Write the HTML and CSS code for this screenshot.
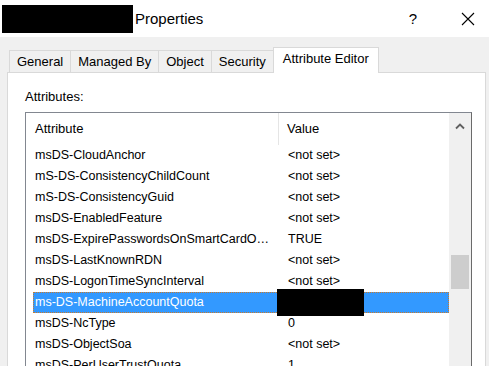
FILE: index.html
```html
<!DOCTYPE html>
<html lang="en">
<head>
    <meta charset="UTF-8">
    <link rel="stylesheet" href="styles.css">
</head>
<body>
    <div class="title-bar">
        <div class="redacted-name"></div>
        <span class="title-text">Properties</span>
        <span class="title-button help">?</span>
        <span class="title-button close">
            <svg width="14" height="14" viewBox="0 0 14 14"><path d="M1 1 L13 13 M13 1 L1 13" stroke="#000" stroke-width="1.1" fill="none"/></svg>
        </span>
    </div>

    <div class="dialog-body">
        <div class="tab-row">
            <div class="tab">General</div>
            <div class="tab">Managed By</div>
            <div class="tab">Object</div>
            <div class="tab">Security</div>
            <div class="tab active">Attribute Editor</div>
        </div>

        <div class="tab-panel">
            <p class="field-label">Attributes:</p>
            <div class="list-box">
                <div class="list-content">
                    <div class="list-header">
                        <div class="header-cell name-col">Attribute</div>
                        <div class="header-cell value-col">Value</div>
                    </div>
                    <div class="list-row"><span class="name-col">msDS-CloudAnchor</span><span class="value-col">&lt;not set&gt;</span></div>
                    <div class="list-row"><span class="name-col">mS-DS-ConsistencyChildCount</span><span class="value-col">&lt;not set&gt;</span></div>
                    <div class="list-row"><span class="name-col">mS-DS-ConsistencyGuid</span><span class="value-col">&lt;not set&gt;</span></div>
                    <div class="list-row"><span class="name-col">msDS-EnabledFeature</span><span class="value-col">&lt;not set&gt;</span></div>
                    <div class="list-row"><span class="name-col">msDS-ExpirePasswordsOnSmartCardOnlyAccounts</span><span class="value-col">TRUE</span></div>
                    <div class="list-row"><span class="name-col">msDS-LastKnownRDN</span><span class="value-col">&lt;not set&gt;</span></div>
                    <div class="list-row"><span class="name-col">msDS-LogonTimeSyncInterval</span><span class="value-col">&lt;not set&gt;</span></div>
                    <div class="list-row selected"><span class="name-col">ms-DS-MachineAccountQuota</span><span class="value-col"><span class="redacted-value"></span></span></div>
                    <div class="list-row"><span class="name-col">msDS-NcType</span><span class="value-col">0</span></div>
                    <div class="list-row"><span class="name-col">msDS-ObjectSoa</span><span class="value-col">&lt;not set&gt;</span></div>
                    <div class="list-row"><span class="name-col">msDS-PerUserTrustQuota</span><span class="value-col">1</span></div>
                </div>
                <div class="scroll-bar">
                    <div class="scroll-arrow">
                        <svg width="10" height="7" viewBox="0 0 10 7"><path d="M1 5.5 L5 1.5 L9 5.5" stroke="#606060" stroke-width="1.8" fill="none"/></svg>
                    </div>
                    <div class="scroll-thumb"></div>
                </div>
            </div>
        </div>
    </div>
</body>
</html>
```

FILE: styles.css
```css
html, body {
    margin: 0;
    padding: 0;
    width: 489px;
    height: 366px;
    overflow: hidden;
}

body {
    background: #f0f0f0;
    font-family: "Liberation Sans", Arial, sans-serif;
    color: #000;
}

/* window title */
.title-bar {
    height: 37px;
    background: #fff;
    display: flex;
    align-items: center;
}

.redacted-name {
    width: 131px;
    height: 28px;
    margin-left: 2px;
    background: #000;
}

.title-text {
    font-size: 15px;
    margin-left: 2px;
    flex: 1;
}

.title-button {
    display: flex;
    align-items: center;
    justify-content: center;
    font-size: 15px;
}

.help {
    width: 20px;
    margin-right: 38px;
}

.close {
    width: 14px;
    margin-right: 14px;
}

/* dialog */
.dialog-body {
    padding: 10px 3px 0 7px;
}

.tab-row {
    display: flex;
    align-items: flex-end;
    height: 25px;
    margin-left: 2px;
}

.tab {
    height: 22px;
    padding: 0 7px;
    font-size: 13px;
    line-height: 21px;
    background: #f0f0f0;
    border: 1px solid #d9d9d9;
    border-bottom: none;
    margin-right: -1px;
    box-sizing: border-box;
}

.tab.active {
    height: 26px;
    padding: 0 9px;
    line-height: 22px;
    background: #fff;
    margin-bottom: -1px;
    position: relative;
}

.tab-panel {
    background: #fff;
    border: 1px solid #d9d9d9;
    height: 300px;
    padding: 15px 12px 0 17px;
}

.field-label {
    margin: 0 0 7px 0;
    font-size: 13px;
    line-height: 17px;
}

.list-box {
    display: flex;
    width: 447px;
    height: 260px;
    overflow: hidden;
    border: 1px solid #828790;
    border-right-color: #6a6a6a;
    box-sizing: border-box;
}

.list-content {
    flex: 1;
    padding-left: 7px;
}

.list-header {
    display: flex;
    height: 32px;
    font-size: 13px;
}

.header-cell {
    display: flex;
    align-items: center;
    padding-bottom: 2px;
}

.list-header .name-col {
    border-right: 1px solid #e5e5e5;
}

.list-header .value-col {
    padding-left: 8px;
}

.list-row {
    display: flex;
    height: 21px;
    align-items: center;
    padding-bottom: 1px;
    font-size: 12.5px;
    box-sizing: border-box;
}

.name-col {
    width: 246px;
    padding-left: 2px;
    white-space: nowrap;
    overflow: hidden;
    box-sizing: border-box;
    flex-shrink: 0;
}

.value-col {
    padding-left: 9px;
    position: relative;
}

.list-row .name-col {
    width: 242px;
    padding-right: 2px;
    text-overflow: ellipsis;
}

.list-row .value-col {
    padding-left: 13px;
}

.list-row.selected {
    background: #3399ff;
    color: #fff;
    outline: 1px dotted #c87a2c;
    outline-offset: -1px;
}

.redacted-value {
    position: absolute;
    left: 2px;
    top: -13px;
    width: 87px;
    height: 27px;
    background: #000;
}

/* scroll bar */
.scroll-bar {
    width: 22px;
    background: #f0f0f0;
    display: flex;
    flex-direction: column;
    align-items: center;
}

.scroll-arrow {
    height: 26px;
    display: flex;
    align-items: center;
    justify-content: center;
}

.scroll-thumb {
    width: 18px;
    height: 34px;
    margin-top: 116px;
    background: #cdcdcd;
}
```
